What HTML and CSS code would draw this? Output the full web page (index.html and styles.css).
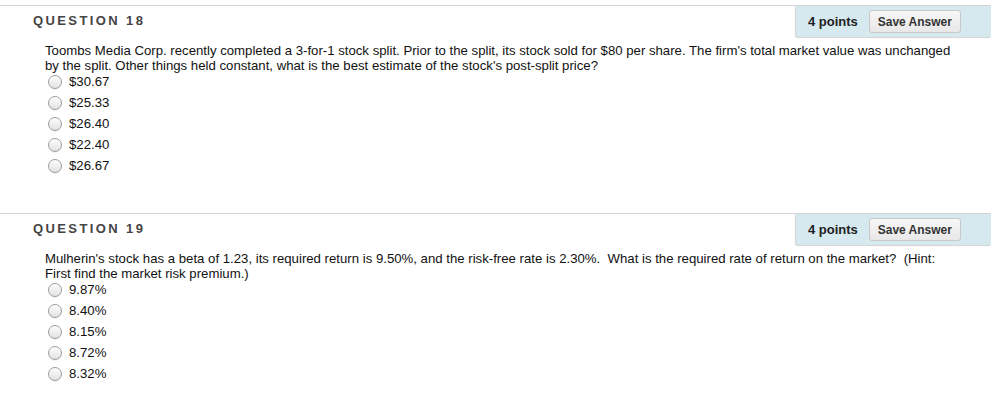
FILE: index.html
```html
<!DOCTYPE html>
<html>
<head>
<meta charset="utf-8">
<link rel="stylesheet" href="styles.css">
</head>
<body>
<div class="page">
  <div class="question">
    <div class="q-head">
      <h3 class="q-title">QUESTION 18</h3>
      <div class="q-meta">
        <span class="points">4 points</span>
        <button class="save">Save Answer</button>
      </div>
    </div>
    <div class="q-body">
      <p class="q-text">Toombs Media Corp. recently completed a 3-for-1 stock split. Prior to the split, its stock sold for $80 per share. The firm's total market value was unchanged<br>by the split. Other things held constant, what is the best estimate of the stock's post-split price?</p>
      <ul class="options">
        <li class="option"><span class="radio"></span><span>$30.67</span></li>
        <li class="option"><span class="radio"></span><span>$25.33</span></li>
        <li class="option"><span class="radio"></span><span>$26.40</span></li>
        <li class="option"><span class="radio"></span><span>$22.40</span></li>
        <li class="option"><span class="radio"></span><span>$26.67</span></li>
      </ul>
    </div>
  </div>
  <div class="question">
    <div class="q-head">
      <h3 class="q-title">QUESTION 19</h3>
      <div class="q-meta">
        <span class="points">4 points</span>
        <button class="save">Save Answer</button>
      </div>
    </div>
    <div class="q-body">
      <p class="q-text">Mulherin's stock has a beta of 1.23, its required return is 9.50%, and the risk-free rate is 2.30%.&nbsp; What is the required rate of return on the market?&nbsp; (Hint:<br>First find the market risk premium.)</p>
      <ul class="options">
        <li class="option"><span class="radio"></span><span>9.87%</span></li>
        <li class="option"><span class="radio"></span><span>8.40%</span></li>
        <li class="option"><span class="radio"></span><span>8.15%</span></li>
        <li class="option"><span class="radio"></span><span>8.72%</span></li>
        <li class="option"><span class="radio"></span><span>8.32%</span></li>
      </ul>
    </div>
  </div>
</div>
</body>
</html>
```
FILE: styles.css
```css
html, body {
  margin: 0;
  padding: 0;
  background: #fff;
}
body {
  font-family: "Liberation Sans", Arial, Helvetica, sans-serif;
  color: #111;
}
.page {
  padding-top: 5px;
  margin-right: 10px;
}
.question {
  border-top: 1px solid #d2d2d2;
  padding-bottom: 37px;
}
.q-head {
  display: flex;
  justify-content: space-between;
  height: 31px;
}
.q-title {
  margin: 0 0 0 33px;
  padding-top: 7px;
  font-size: 13px;
  line-height: 15px;
  font-weight: bold;
  letter-spacing: 2.4px;
  color: #444;
}
.q-meta {
  width: 195px;
  box-sizing: border-box;
  background: #d5e9ef;
  border-bottom-left-radius: 3px;
  box-shadow: -1px 1px 1px rgba(0, 0, 0, 0.18);
  display: flex;
  align-items: center;
  padding-left: 12px;
  gap: 11px;
}
.points {
  font-size: 13px;
  font-weight: bold;
  color: #222;
}
.save {
  width: 92px;
  height: 23px;
  padding: 0;
  margin: 0;
  font-family: inherit;
  font-size: 12px;
  font-weight: bold;
  color: #333;
  background: linear-gradient(#f7f7f7, #e8e8e8);
  border: 1px solid #c9c9c9;
  border-radius: 3px;
}
.q-body {
  padding-left: 45px;
  margin-top: 6px;
  font-size: 13.2px;
  line-height: 15px;
}
.q-text {
  margin: 0;
}
.options {
  list-style: none;
  margin: -2px 0 0 0;
  padding: 0;
}
.option {
  display: flex;
  align-items: center;
  height: 21px;
  padding-left: 3px;
  gap: 7px;
}
.radio {
  width: 14px;
  height: 14px;
  box-sizing: border-box;
  border-radius: 50%;
  border: 1px solid #9c9c9c;
  background: linear-gradient(#fdfdfd, #e2e2e2);
  box-shadow: inset 0 1px 1px rgba(255, 255, 255, 0.8), 0 1px 0 rgba(0, 0, 0, 0.06);
}
```
